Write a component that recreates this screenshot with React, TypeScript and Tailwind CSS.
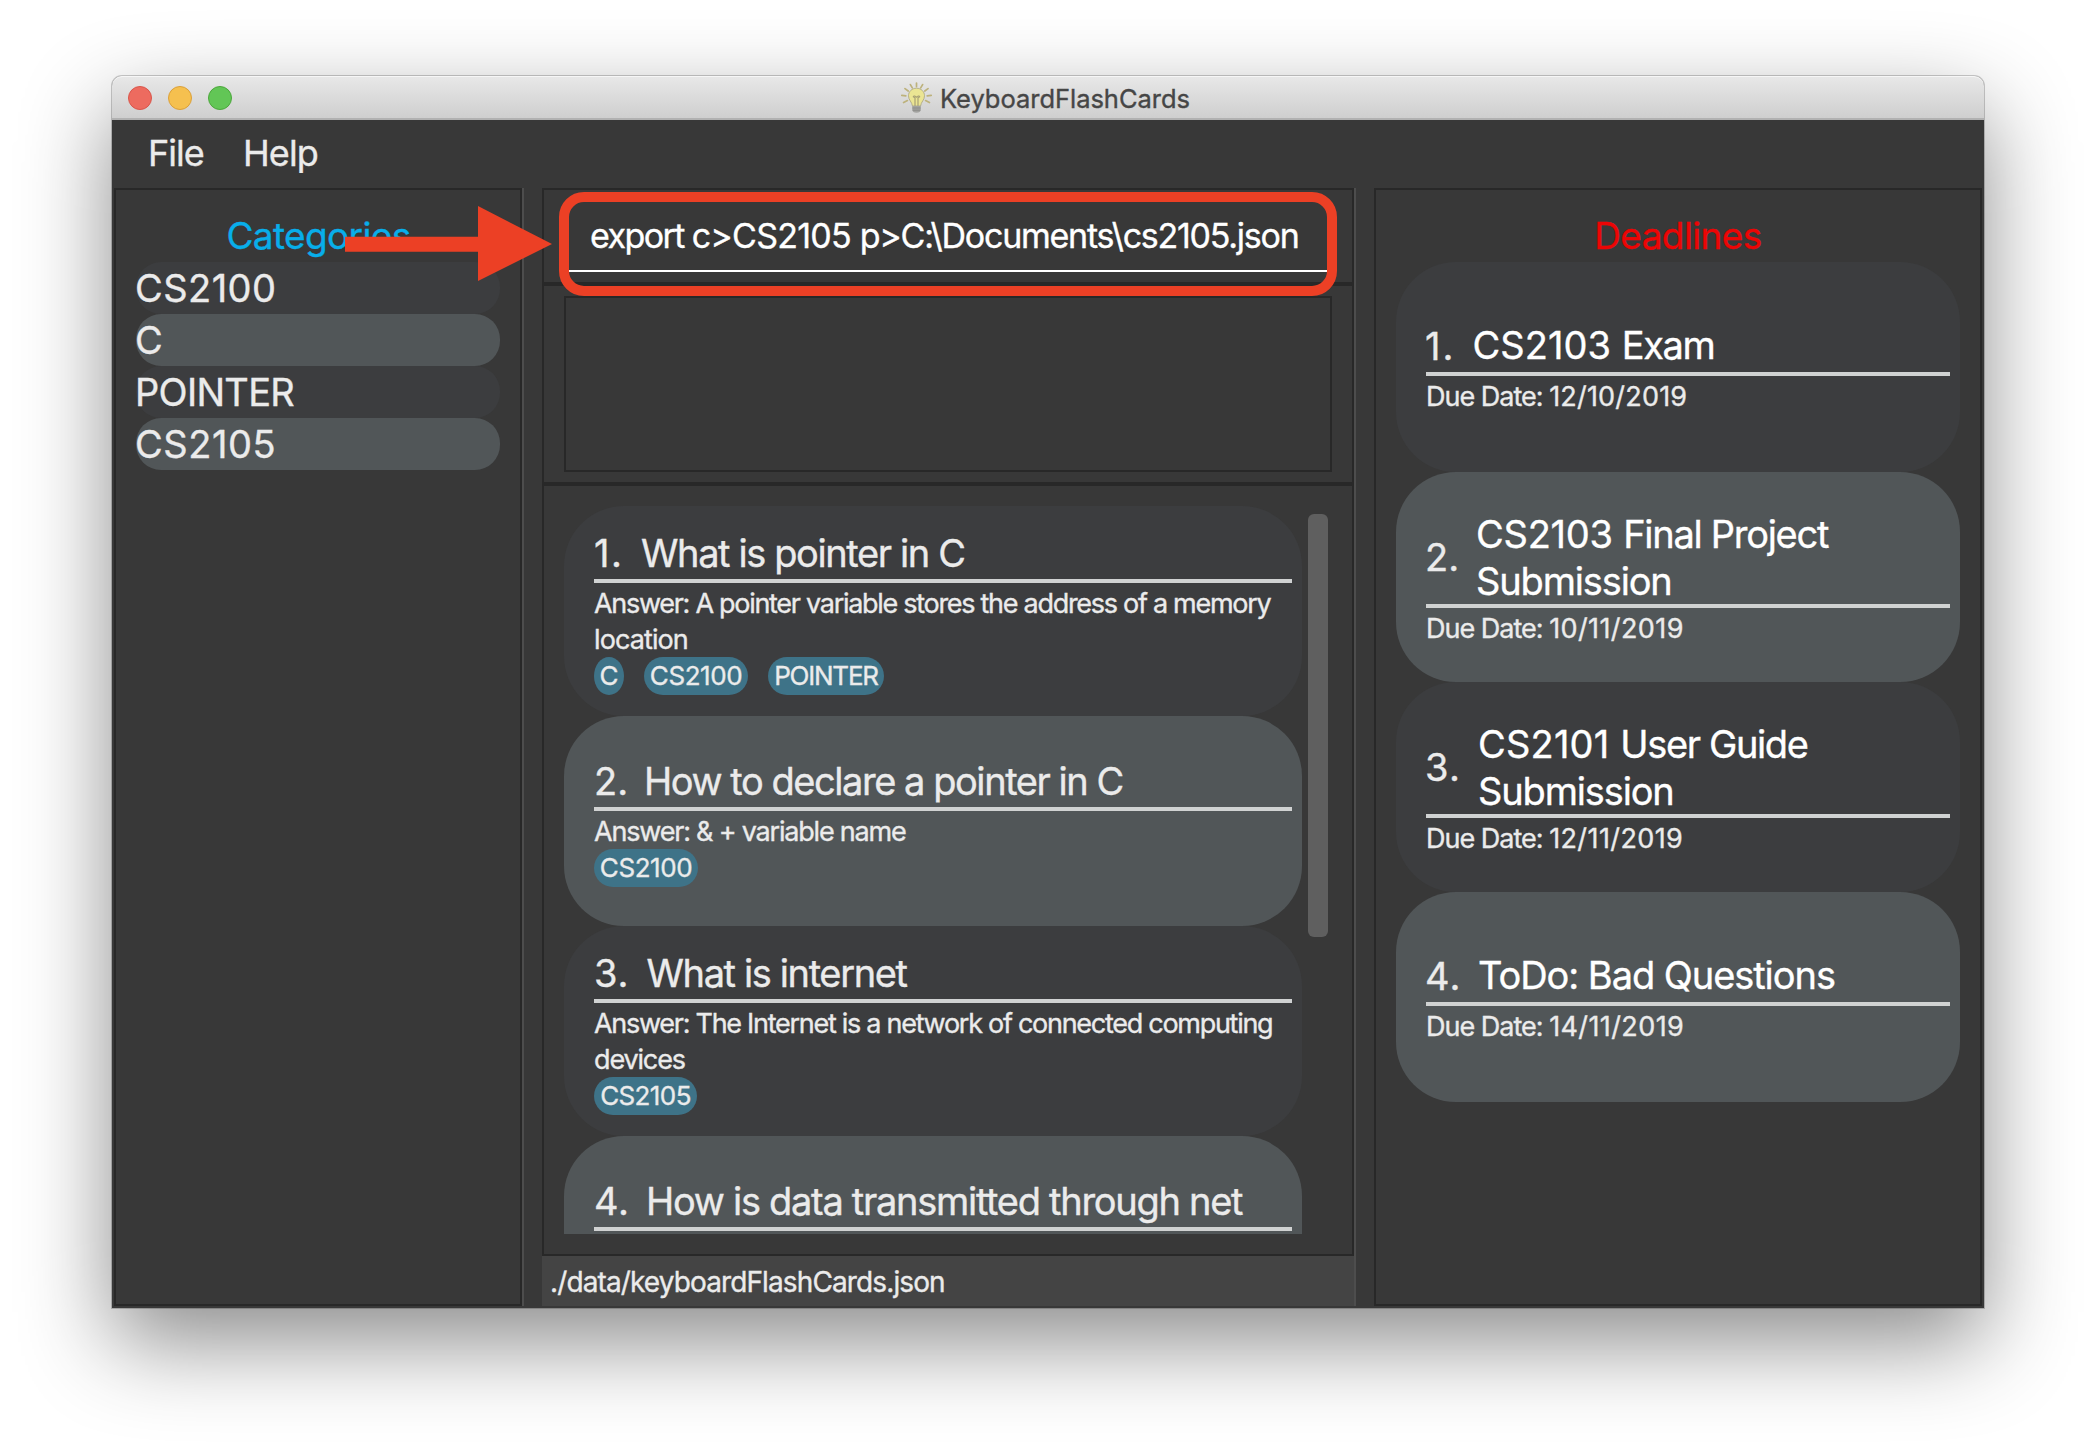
type Line = { text: string; cls: string; lead?: string; leadCls?: string };

type Flashcard = {
  number: string;
  numberCls: string;
  question: Line;
  answer: Line[];
  tags: Line[];
};

type Deadline = {
  number: string;
  numberCls: string;
  title: Line[];
  due: Line;
};

const categories: Line[] = [
  { text: "CS2100", cls: "tracking-[0.45px]" },
  { text: "C", cls: "" },
  { text: "POINTER", cls: "tracking-[-0.7px]" },
  { text: "CS2105", cls: "tracking-[0.55px]" },
];

const flashcards: Flashcard[] = [
  {
    number: "1.",
    numberCls: "w-[47px] tracking-[1.5px]",
    question: { text: "What is pointer in C", cls: "tracking-[-1.39px]" },
    answer: [
      { text: "Answer: A pointer variable stores the address of a memory", cls: "tracking-[-1.29px]" },
      { text: "location", cls: "tracking-[-0.9px]" },
    ],
    tags: [
      { text: "C", cls: "w-[30px] rounded-[15px/19px]" },
      { text: "CS2100", cls: "w-[104px] rounded-[19px] tracking-[-0.44px]" },
      { text: "POINTER", cls: "w-[116px] rounded-[19px] tracking-[-1.24px]" },
    ],
  },
  {
    number: "2.",
    numberCls: "w-[50px] tracking-[0px]",
    question: { text: "How to declare a pointer in C", cls: "tracking-[-1.45px]" },
    answer: [{ text: "Answer: & + variable name", cls: "tracking-[-1.2px]" }],
    tags: [{ text: "CS2100", cls: "w-[104px] rounded-[19px] tracking-[-0.44px]" }],
  },
  {
    number: "3.",
    numberCls: "w-[52.500px] tracking-[0.8px]",
    question: { text: "What is internet", cls: "tracking-[-1.38px]" },
    answer: [
      { text: "Answer: The Internet is a network of connected computing", cls: "tracking-[-1.28px]" },
      { text: "devices", cls: "tracking-[-1.15px]" },
    ],
    tags: [{ text: "CS2105", cls: "w-[103px] rounded-[19px] tracking-[-0.6px]" }],
  },
  {
    number: "4.",
    numberCls: "w-[52px] tracking-[0.8px]",
    question: { text: "How is data transmitted through net", cls: "tracking-[-1.29px]" },
    answer: [],
    tags: [],
  },
];

const deadlines: Deadline[] = [
  {
    number: "1.",
    numberCls: "w-[47.500px] tracking-[2px]",
    title: [{ lead: "CS2103 ", leadCls: "tracking-[0.05px]", text: "Exam", cls: "tracking-[-1.4px]" }],
    due: { text: "12/10/2019", cls: "tracking-[0.2px]" },
  },
  {
    number: "2.",
    numberCls: "w-[51px] tracking-[0px]",
    title: [
      { lead: "CS2103 ", leadCls: "tracking-[-0.25px]", text: "Final Project", cls: "tracking-[-1.28px]" },
      { text: "Submission", cls: "tracking-[-1.15px]" },
    ],
    due: { text: "10/11/2019", cls: "tracking-[0.4px]" },
  },
  {
    number: "3.",
    numberCls: "w-[53px] tracking-[1.3px]",
    title: [
      { lead: "CS2101 ", leadCls: "tracking-[0.2px]", text: "User Guide", cls: "tracking-[-1.37px]" },
      { text: "Submission", cls: "tracking-[-1.15px]" },
    ],
    due: { text: "12/11/2019", cls: "tracking-[0.4px]" },
  },
  {
    number: "4.",
    numberCls: "w-[53px] tracking-[1.3px]",
    title: [{ text: "ToDo: Bad Questions", cls: "tracking-[-1.06px]" }],
    due: { text: "14/11/2019", cls: "tracking-[0.4px]" },
  },
];

function BulbIcon() {
  return (
    <svg className="h-[32px] w-[32px] shrink-0" viewBox="0 0 32 32" fill="none">
      <path
        d="M15.500 1v3.600M9.400 2.600l1.900 3.300M21.600 2.600l-1.900 3.300M4 6.600l3.200 2.400M27 6.600l-3.200 2.400M.8 13.400l4 .4M30.200 13.400l-4 .4M2.600 20.600l3.800-2M28.400 20.600l-3.800-2"
        stroke="#bdb27c"
        strokeWidth="1.700"
        strokeLinecap="round"
      />
      <path
        d="M15.5 6.2c-4.6 0-8 3.4-8 7.6 0 4.4 3.4 5.8 4 10.400h8c.6-4.600 4-6 4-10.400 0-4.200-3.400-7.600-8-7.600Z"
        fill="#ebe593"
        stroke="#b5b08a"
        strokeWidth="1"
      />
      <path d="M14 24v-8.400l-2-.8M17 24v-8.400l2-.8M12 14.800c1-1.600 2.400-.6 3.500.4 1.100-1 2.500-2 3.500-.4" stroke="#a39c72" strokeWidth="1.100" />
      <path d="M11.300 23.800h8.400v4.200c0 1.300-1.600 2.800-4.200 2.800s-4.200-1.500-4.200-2.800Z" fill="#a3a3a0" />
      <path d="M11.300 26h8.400M11.600 28.200h7.800" stroke="#858583" strokeWidth=".8" />
    </svg>
  );
}

function TitleBar() {
  return (
    <header className="flex h-[44px] items-center rounded-t-[10px] border-b-2 border-[#b1b1b1] bg-linear-to-b from-[#e8e8e8] to-[#cfcfcf] pt-[2px] shadow-[inset_0_1px_0_#f6f6f6]">
      <div className="ml-[16px] flex w-[773px] gap-[16px]">
        <span className="h-[24px] w-[24px] rounded-full border border-[#d9564b] bg-[#ed6b5f]" />
        <span className="h-[24px] w-[24px] rounded-full border border-[#dba03a] bg-[#f5c04f]" />
        <span className="h-[24px] w-[24px] rounded-full border border-[#4ca73c] bg-[#62c656]" />
      </div>
      <BulbIcon />
      <h1 className="pt-px pl-[7px] text-[25.5px] leading-[41px] tracking-[-0.03px] text-[#464646]">KeyboardFlashCards</h1>
    </header>
  );
}

function CategoryPanel() {
  return (
    <aside className="w-[410px] border-r-2 border-[#4d4d4d]">
      <div className="h-full border-2 border-[#282828] px-[20px] pt-[24px]">
        <h2 className="h-[48px] pl-px text-center text-[37px] leading-[43px] tracking-[-0.65px] text-[#08aeea]">Categories</h2>
        <ul>
          {categories.map((c) => (
            <li key={c.text} className="h-[52px] rounded-[25px] odd:bg-[#3c3d3f] even:bg-[#515658]">
              <span className={`-ml-px block text-[38px] leading-[52px] ${c.cls}`}>{c.text}</span>
            </li>
          ))}
        </ul>
      </div>
    </aside>
  );
}

function FlashcardItem({ card }: { card: Flashcard }) {
  return (
    <li className="flex h-[210px] flex-col justify-center rounded-[60px] pr-[10px] pl-[30px] odd:bg-[#3c3d3f] even:bg-[#515658]">
      <div className="flex h-[56px] shrink-0 border-b-4 border-[#d0d2d2] text-[38px] leading-[52px]">
        <span className={`shrink-0 ${card.numberCls}`}>{card.number}</span>
        <span className={`whitespace-nowrap ${card.question.cls}`}>{card.question.text}</span>
      </div>
      <div className="min-h-[39px] pt-[3px] text-[27px] leading-[36px]">
        {card.answer.map((l) => (
          <p key={l.text} className={`whitespace-nowrap ${l.cls}`}>
            {l.text}
          </p>
        ))}
      </div>
      <div className="-mt-px flex h-[38px] gap-[20px]">
        {card.tags.map((t) => (
          <span key={t.text} className={`h-[38px] bg-[#3e7388] text-center text-[26px] leading-[37px] ${t.cls}`}>
            {t.text}
          </span>
        ))}
      </div>
    </li>
  );
}

function CenterColumn() {
  return (
    <main className="flex w-[814px] flex-col border-r-2 border-[#4d4d4d]">
      <section className="h-[96px] border-2 border-[#282828] px-[20px]">
        <div className="h-[82px] border-b-2 border-white px-[26px] pt-[12px] text-[34px] leading-[68px] whitespace-nowrap text-white">
          <span className="tracking-[-1.6px]">export </span>
          <span className="tracking-[-0.75px]">{"c>CS2105 "}</span>
          <span className="tracking-[-1.25px]">{"p>C:\\Documents\\cs2105.json"}</span>
        </div>
      </section>
      <section className="h-[200px] border-2 border-[#282828] px-[20px] py-[10px]">
        <div className="h-full border-2 border-[#282828]" />
      </section>
      <section className="flex h-[772px] gap-[6px] border-2 border-[#282828] px-[20px] py-[20px]">
        <ul className="h-[728px] w-[738px] overflow-hidden">
          {flashcards.map((c) => (
            <FlashcardItem key={c.number} card={c} />
          ))}
        </ul>
        <div className="mt-[8px] h-[423px] w-[20px] rounded-[6px] bg-[#5f5f5f]" />
      </section>
      <footer className="h-[50px] bg-[#444444] pl-[8px] text-[28px] leading-[52px] tracking-[-0.88px]">
        ./data/keyboardFlashCards.json
      </footer>
    </main>
  );
}

function DeadlineItem({ item }: { item: Deadline }) {
  const wraps = item.title.length > 1;
  return (
    <li className="flex h-[210px] flex-col justify-center rounded-[60px] pr-[10px] pl-[30px] odd:bg-[#3c3d3f] even:bg-[#515658]">
      <div className={`flex items-center border-b-4 border-[#d0d2d2] text-[38px] leading-[47px] ${wraps ? "h-[100px]" : "h-[56px]"}`}>
        <span className={`-ml-px shrink-0 ${item.numberCls} ${wraps ? "pt-[2px]" : ""}`}>{item.number}</span>
        <div className={`text-white ${wraps ? "pt-[3px]" : "pb-[2px]"}`}>
          {item.title.map((l) => (
            <p key={l.text} className={`whitespace-nowrap ${l.cls}`}>
              {l.lead && <span className={l.leadCls}>{l.lead}</span>}
              {l.text}
            </p>
          ))}
        </div>
      </div>
      <p className={`-mb-px pt-[3px] text-[27px] leading-[36px] ${item.due.cls}`}>
        <span className="tracking-[-1px]">Due Date: </span>
        {item.due.text}
      </p>
    </li>
  );
}

function DeadlinePanel() {
  return (
    <aside className="w-[608px] border-2 border-[#282828] px-[20px] pt-[24px]">
      <h2 className="h-[48px] text-center text-[37px] leading-[43px] tracking-[-0.6px] text-[#ec0505]">Deadlines</h2>
      <ul>
        {deadlines.map((d) => (
          <DeadlineItem key={d.number} item={d} />
        ))}
      </ul>
    </aside>
  );
}

function Highlight() {
  return (
    <>
      <svg className="absolute top-[130px] left-[233px] h-[75px] w-[207px]" viewBox="0 0 207 75">
        <path d="M0 30.700h133V0l74 38-74 37V45.700H0Z" fill="#ec4025" />
      </svg>
      <div className="absolute top-[116px] left-[447px] h-[104px] w-[778px] rounded-[25px] border-10 border-[#ec4025]" />
    </>
  );
}

export default function App() {
  return (
    <div className="h-[1456px] w-[2096px] overflow-hidden bg-white pt-[76px] pl-[112px] font-['Inter','Liberation_Sans',sans-serif] text-[#ebebeb] [-webkit-text-stroke:0.35px]">
      <div className="relative h-[1232px] w-[1872px] rounded-t-[10px] bg-[#383838] shadow-[0_0_0_1px_rgba(0,0,0,0.2),0_34px_90px_rgba(0,0,0,0.46)]">
        <TitleBar />
        <nav className="flex h-[68px] pl-[36px] text-[36px] leading-[66px]">
          <span className="w-[95px] tracking-[-1px]">File</span>
          <span className="tracking-[-0.9px]">Help</span>
        </nav>
        <div className="flex h-[1118px] gap-[18px] pl-[2px]">
          <CategoryPanel />
          <CenterColumn />
          <DeadlinePanel />
        </div>
        <Highlight />
      </div>
    </div>
  );
}
